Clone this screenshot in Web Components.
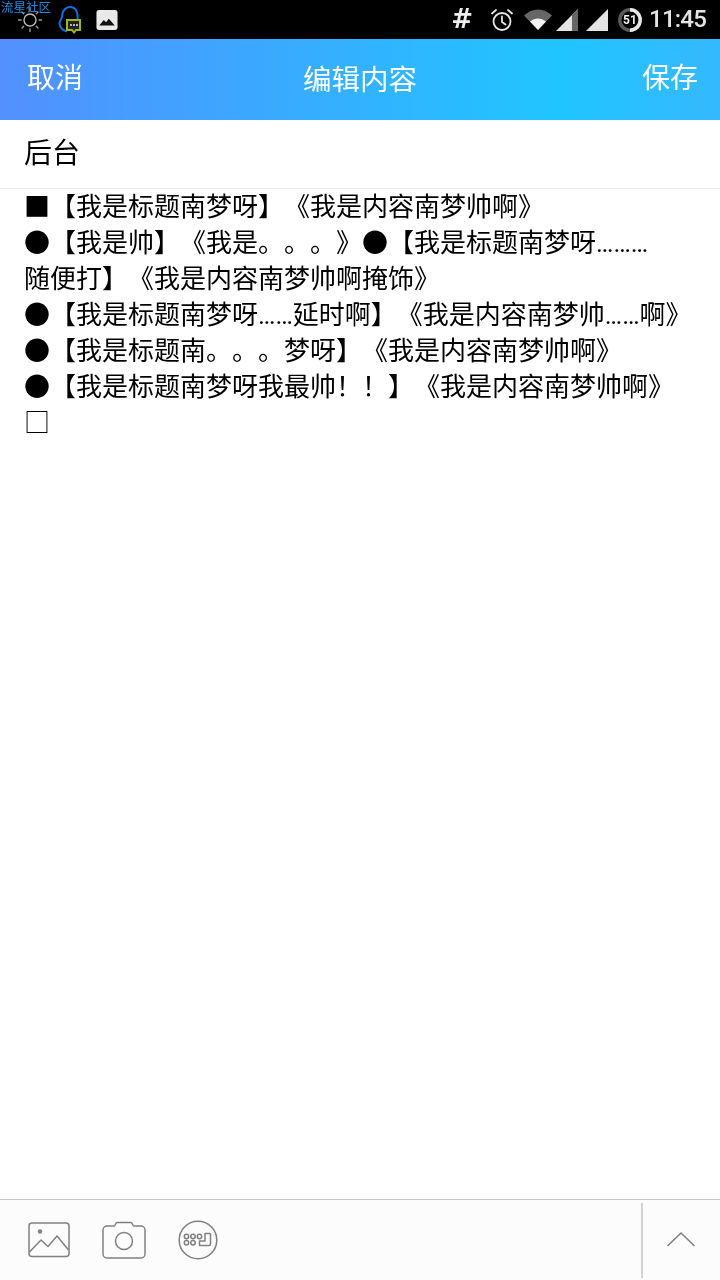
<!DOCTYPE html>
<html lang="zh">
<head>
<meta charset="utf-8">
<title>编辑内容</title>
<style>
  html, body { margin: 0; padding: 0; background: #fff; }
  body { font-family: Roboto, "Noto Sans CJK SC", sans-serif; }
</style>
</head>
<body>
<edit-screen>
  <status-bar></status-bar>
  <title-bar left="取消" title="编辑内容" right="保存"></title-bar>
  <subject-row>后台</subject-row>
  <content-area>■【我是标题南梦呀】《我是内容南梦帅啊》<br>●【我是帅】《我是。。。》●【我是标题南梦呀………<br>随便打】《我是内容南梦帅啊掩饰》<br>●【我是标题南梦呀……延时啊】《我是内容南梦帅……啊》<br>●【我是标题南。。。梦呀】《我是内容南梦帅啊》<br>●【我是标题南梦呀我最帅！！】《我是内容南梦帅啊》<br>□</content-area>
  <tool-bar></tool-bar>
</edit-screen>

<script>
class EditScreen extends HTMLElement {
  connectedCallback() {
    this.attachShadow({ mode: 'open' });
    this.shadowRoot.innerHTML = `
      <style>
        :host {
          display: flex;
          flex-direction: column;
          width: 720px;
          height: 1280px;
          overflow: hidden;
          background: #fff;
          will-change: transform;
        }
      </style>
      <slot></slot>
    `;
  }
}

class StatusBar extends HTMLElement {
  connectedCallback() {
    this.attachShadow({ mode: 'open' });
    this.shadowRoot.innerHTML = `
      <style>
        :host {
          display: flex;
          align-items: center;
          justify-content: space-between;
          position: relative;
          height: 39px;
          flex: none;
          background: #000;
          color: #e4e4e4;
        }
        .side { display: flex; align-items: center; }
        .left { padding-left: 17px; }
        .right { padding-right: 14px; }
        svg { display: block; flex: none; }
        .brand {
          position: absolute;
          left: 1px;
          top: 0;
          font: 12.5px/15px Roboto, "Noto Sans CJK SC", sans-serif;
          color: #1f8ce0;
        }
        .hash { font: bold 26px/39px "DejaVu Sans", sans-serif; width: 22px; text-align: center; color: #eee; margin-right: 17px; }
        .time { font: 500 24px/39px Roboto, sans-serif; margin-left: 7px; letter-spacing: -0.8px; }
      </style>
      <div class="side left">
        <svg width="26" height="26" viewBox="0 0 26 26" fill="none" stroke="#9a9a9a" stroke-width="1.4" stroke-linecap="round">
          <circle cx="13" cy="13" r="6" stroke="#bbb"/>
          <path d="M13 1.5v2.5M13 22v2.5M1.5 13H4M22 13h2.5M5 5l1.7 1.7M19.3 19.3 21 21M5 21l1.7-1.7M19.3 6.700 21 5"/>
        </svg>
        <svg width="26" height="28" viewBox="0 0 26 28" fill="none" style="margin-left:14px">
          <path d="M10 25.500C7 25 2.500 22 2.500 17.500c0-3 2.500-4.500 2.500-7C5 4.500 9 1 13 1s7 3 7.500 8v5" stroke="#0f6fe0" stroke-width="2"/>
          <path d="M10 14h13v10h-4l-2 2.500-2-2.500h-5z" fill="#222" stroke="#9ab80e" stroke-width="2"/>
          <path d="M13 19h2M16 19h2M19 19h2" stroke="#e4e4e4" stroke-width="1.600"/>
        </svg>
        <svg width="22" height="22" viewBox="0 0 24 22" style="margin-left:13px">
          <rect x="0.500" y="0" width="23" height="22" rx="3" fill="#e9e9e9"/>
          <path d="M3.500 17l5-6 2.500 2.500 3-4 6.500 7.500z" fill="#111"/>
        </svg>
      </div>
      <div class="brand">流星社区</div>
      <div class="side right">
        <div class="hash">#</div>
        <svg width="24" height="24" viewBox="0 0 24 24" fill="none" stroke="#e4e4e4" stroke-width="1.800">
          <circle cx="12" cy="13.500" r="8.500"/>
          <path d="M12 8.500v5.500l3.500 2.500M2 5.500 6 2M22 5.500 18 2" stroke-linecap="round"/>
        </svg>
        <svg width="28" height="21" viewBox="0 0 28 21" style="margin-left:10px">
          <path d="M0 6.500C8-1.500 20-1.500 28 6.500L14 21z" fill="#666"/>
          <path d="M6 12.500c5-4 11-4 16 0L14 21z" fill="#f2f2f2"/>
        </svg>
        <svg width="22" height="22" viewBox="0 0 22 22" style="margin-left:4px">
          <path d="M22 0v22H0z" fill="#e4e4e4"/>
          <path d="M22 0v22h-6V6z" fill="#666"/>
        </svg>
        <svg width="22" height="22" viewBox="0 0 22 22" style="margin-left:8px">
          <path d="M22 0v22H0z" fill="#e4e4e4"/>
        </svg>
        <svg width="24" height="24" viewBox="0 0 24 24" fill="none" style="margin-left:10px">
          <circle cx="12" cy="12" r="10.200" stroke="#5a5a5a" stroke-width="3.400"/>
          <path d="M12 1.800a10.200 10.200 0 0 1 0 20.400" stroke="#e8e8e8" stroke-width="3.400"/>
          <text x="12" y="16.200" text-anchor="middle" font-family="Roboto, sans-serif" font-size="12" font-weight="700" fill="#eee">51</text>
        </svg>
        <div class="time">11:45</div>
      </div>
    `;
  }
}

class TitleBar extends HTMLElement {
  connectedCallback() {
    this.attachShadow({ mode: 'open' });
    this.shadowRoot.innerHTML = `
      <style>
        :host {
          display: flex;
          align-items: center;
          justify-content: space-between;
          position: relative;
          flex: none;
          height: 81px;
          padding: 0 22px 0 27px;
          box-sizing: border-box;
          background: linear-gradient(90deg, #5290ff 0%, #20c5ff 78%, #35b8fd 100%);
          color: #fff;
          font: 28px/36px Roboto, "Noto Sans CJK SC", sans-serif;
        }
        .side { position: relative; top: -1px; }
        .title {
          position: absolute;
          left: 0;
          right: 0;
          top: 24px;
          text-align: center;
          font-size: 28.500px;
        }
      </style>
      <div class="title">${this.getAttribute('title')}</div>
      <div class="side">${this.getAttribute('left')}</div>
      <div class="side">${this.getAttribute('right')}</div>
    `;
  }
}

class SubjectRow extends HTMLElement {
  connectedCallback() {
    this.attachShadow({ mode: 'open' });
    this.shadowRoot.innerHTML = `
      <style>
        :host {
          display: flex;
          align-items: center;
          flex: none;
          height: 69px;
          padding: 0 24px;
          box-sizing: border-box;
          border-bottom: 1px solid #ececec;
          color: #000;
          font: 28px/36px Roboto, "Noto Sans CJK SC", sans-serif;
        }
      </style>
      <slot></slot>
    `;
  }
}

class ContentArea extends HTMLElement {
  connectedCallback() {
    this.attachShadow({ mode: 'open' });
    this.shadowRoot.innerHTML = `
      <style>
        :host {
          display: block;
          flex: 1;
          padding: 0 24px;
          color: #000;
          font: 26px/36px Roboto, "Noto Sans CJK SC", sans-serif;
          text-spacing-trim: space-all;
        }
      </style>
      <slot></slot>
    `;
  }
}

class ToolBar extends HTMLElement {
  connectedCallback() {
    this.attachShadow({ mode: 'open' });
    this.shadowRoot.innerHTML = `
      <style>
        :host {
          display: flex;
          align-items: center;
          flex: none;
          height: 81px;
          box-sizing: border-box;
          border-top: 1px solid #c4c4c4;
          background: #fcfcfc;
          padding-left: 28px;
        }
        svg { display: block; flex: none; }
        .tools { display: flex; align-items: center; flex: 1; }
        .more {
          display: flex;
          align-items: center;
          justify-content: center;
          width: 77px;
          height: 75px;
          border-left: 2px solid #d2d2d2;
        }
        .more svg { margin: 0 2px 2px 0; }
      </style>
      <div class="tools">
        <svg width="42" height="36" viewBox="0 0 42 36" fill="none" stroke="#808080" stroke-width="1.500" stroke-linejoin="round">
          <rect x="1" y="1" width="40" height="33.500" rx="3"/>
          <path d="M1.500 30 13 18l7 6.500L29 14l11.500 14"/>
          <circle cx="12" cy="9.500" r="2.200" fill="#808080" stroke="none"/>
        </svg>
        <svg width="44" height="38" viewBox="0 0 44 38" fill="none" stroke="#808080" stroke-width="1.500" stroke-linejoin="round" style="margin-left:32px">
          <path d="M5 5h7.500l2-3.500h15L31.500 5H39a4 4 0 0 1 4 4v24a4 4 0 0 1-4 4H5a4 4 0 0 1-4-4V9a4 4 0 0 1 4-4z"/>
          <circle cx="22" cy="20" r="8.500"/>
        </svg>
        <svg width="40" height="40" viewBox="0 0 40 40" fill="none" stroke="#808080" stroke-width="1.500" style="margin-left:32px">
          <circle cx="20" cy="20" r="18.800"/>
          <circle cx="8.500" cy="16.500" r="2.200"/><circle cx="15" cy="16.500" r="2.200"/><circle cx="21.500" cy="16.500" r="2.200"/>
          <circle cx="8.500" cy="22.700" r="2.200"/><circle cx="15" cy="22.700" r="2.200"/>
          <path d="M27 13.500h4.500a1 1 0 0 1 1 1V24a1.500 1.500 0 0 1-1.500 1.500H21.500V21H27z" stroke-linejoin="round"/>
        </svg>
      </div>
      <div class="more">
        <svg width="30" height="16" viewBox="0 0 30 16" fill="none" stroke="#808080" stroke-width="1.600">
          <path d="M1.500 15 15 2l13.500 13"/>
        </svg>
      </div>
    `;
  }
}

customElements.define('edit-screen', EditScreen);
customElements.define('status-bar', StatusBar);
customElements.define('title-bar', TitleBar);
customElements.define('subject-row', SubjectRow);
customElements.define('content-area', ContentArea);
customElements.define('tool-bar', ToolBar);
</script>
</body>
</html>
